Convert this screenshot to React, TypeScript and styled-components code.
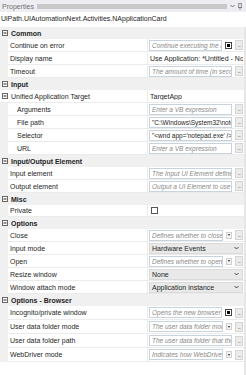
import React from 'react';
import styled, { createGlobalStyle } from 'styled-components';

const GlobalStyle = createGlobalStyle`
  html, body { margin: 0; padding: 0; background: #fff; }
  body { font-family: "Liberation Sans", Arial, sans-serif; }
  * { box-sizing: border-box; }
`;

const Panel = styled.div`
  width: 246px;
  height: 375px;
  overflow: hidden;
  background: #fff;
  display: flex;
  flex-direction: column;
`;

const TitleBar = styled.div`
  height: 12px;
  display: flex;
  align-items: center;
  gap: 3px;
  padding: 0 4px 0 2px;
  background: #eeeef2;
  font-size: 7px;
  color: #6e6e6e;
`;

const Grip = styled.div`
  flex: 1;
  height: 5px;
  background-image: radial-gradient(circle, #c6c6c6 0.7px, transparent 0.8px);
  background-size: 2px 2px;
`;

const TypeLine = styled.div`
  height: 12px;
  display: flex;
  align-items: center;
  padding-left: 1px;
  font-size: 7px;
  color: #1e1e1e;
  white-space: nowrap;
  margin-bottom: 3px;
`;

const Grid = styled.div`
  flex: 1;
  display: flex;
  flex-direction: column;
  border-right: 2px solid #e6e6e6;
`;

const CategoryRow = styled.div`
  height: 12px;
  display: flex;
  align-items: center;
  gap: 3px;
  padding-left: 2px;
  background: #f0f0f0;
  font-size: 7px;
  font-weight: bold;
  color: #1e1e1e;
`;

const PropRow = styled.div<{ $h?: number }>`
  height: ${p => p.$h ?? 13}px;
  display: grid;
  grid-template-columns: 8px 140px 1fr;
  background: #f0f0f0;
`;

const GroupRow = styled.div`
  height: 13px;
  display: grid;
  grid-template-columns: 148px 1fr;
  background: #fff;
`;

const Gutter = styled.div``;

const LabelCell = styled.div<{ $indent?: boolean }>`
  background: #fff;
  border-bottom: 1px solid #ebebeb;
  border-right: 1px solid #ebebeb;
  padding-left: ${p => (p.$indent ? 9 : 2)}px;
  display: flex;
  align-items: center;
  font-size: 7px;
  color: #262626;
  white-space: nowrap;
  overflow: hidden;
`;

const GroupLabel = styled(LabelCell)`
  padding-left: 2px;
  gap: 3px;
`;

const ValueCell = styled.div`
  background: #fff;
  border-bottom: 1px solid #ebebeb;
  display: flex;
  align-items: center;
  gap: 3px;
  padding: 0 1px;
  min-width: 0;
  overflow: hidden;
`;

const TextBox = styled.div<{ $filled?: boolean }>`
  flex: 1;
  min-width: 0;
  height: 11px;
  border: 1px solid #c9d3de;
  background: #fff;
  font-size: 6.5px;
  font-style: ${p => (p.$filled ? 'normal' : 'italic')};
  color: ${p => (p.$filled ? '#1e1e1e' : '#8a8a8a')};
  display: flex;
  align-items: center;
  padding: 0 2px;
  white-space: nowrap;
  overflow: hidden;
`;

const PlainValue = styled.div`
  font-size: 7px;
  color: #1e1e1e;
  padding-left: 1px;
  white-space: nowrap;
  overflow: hidden;
`;

const DotsButton = styled.div`
  flex: none;
  width: 8px;
  height: 10px;
  background: #ececec;
  border: 1px solid #d4d4d4;
  font-size: 5px;
  letter-spacing: -0.5px;
  line-height: 1;
  color: #333;
  display: flex;
  align-items: flex-end;
  justify-content: center;
  padding-bottom: 1px;
  overflow: hidden;
`;

const NullCheck = styled.div`
  flex: none;
  width: 7px;
  height: 7px;
  border: 1px solid #444;
  background: #fff;
  display: flex;
  align-items: center;
  justify-content: center;
  &::after {
    content: '';
    width: 3px;
    height: 3px;
    background: #000;
  }
`;

const EmptyCheck = styled.div`
  width: 7px;
  height: 7px;
  border: 1px solid #555;
  background: #fff;
  margin-left: 2px;
`;

const MiniDrop = styled.div`
  flex: none;
  width: 6px;
  height: 7px;
  border: 1px solid #d0d0d0;
  background: #f4f4f4;
  display: flex;
  align-items: center;
  justify-content: center;
  &::after {
    content: '';
    border-left: 1.5px solid transparent;
    border-right: 1.5px solid transparent;
    border-top: 2px solid #222;
  }
`;

const Select = styled.div`
  flex: 1;
  height: 11px;
  background: #e9e9e9;
  border: 1px solid #dadada;
  font-size: 7px;
  color: #1e1e1e;
  display: flex;
  align-items: center;
  justify-content: space-between;
  padding: 0 3px 0 2px;
  white-space: nowrap;
`;

const Expander = () => (
  <svg width="6" height="6" viewBox="0 0 6 6" style={{ flex: 'none' }}>
    <rect x="0.5" y="0.5" width="5" height="5" fill="#fff" stroke="#666" />
    <line x1="1.5" y1="3" x2="4.5" y2="3" stroke="#222" />
  </svg>
);

const Chevron = ({ color = '#444' }: { color?: string }) => (
  <svg width="5" height="4" viewBox="0 0 5 4" style={{ flex: 'none' }}>
    <polyline points="0.5,1 2.5,3 4.5,1" fill="none" stroke={color} strokeWidth="0.9" />
  </svg>
);

const Pin = () => (
  <svg width="4" height="7" viewBox="0 0 4 7" style={{ flex: 'none' }}>
    <rect x="0.7" y="0.5" width="2.6" height="4" fill="none" stroke="#777" strokeWidth="0.8" />
    <line x1="0" y1="4.5" x2="4" y2="4.5" stroke="#777" strokeWidth="0.8" />
    <line x1="2" y1="4.5" x2="2" y2="7" stroke="#777" strokeWidth="0.8" />
  </svg>
);

type Val =
  | { kind: 'text'; ph: string; filled?: boolean; check?: boolean; drop?: boolean }
  | { kind: 'plain'; v: string }
  | { kind: 'select'; v: string }
  | { kind: 'check' };

const Value = ({ val }: { val: Val }) => (
  <ValueCell>
    {val.kind === 'text' && (
      <>
        <TextBox $filled={val.filled}>{val.ph}</TextBox>
        {val.check && <NullCheck />}
        {val.drop && <MiniDrop />}
        <DotsButton>...</DotsButton>
      </>
    )}
    {val.kind === 'plain' && <PlainValue>{val.v}</PlainValue>}
    {val.kind === 'select' && (
      <Select>
        {val.v}
        <Chevron color="#333" />
      </Select>
    )}
    {val.kind === 'check' && <EmptyCheck />}
  </ValueCell>
);

const Row = ({ label, val, h, indent }: { label: string; val: Val; h?: number; indent?: boolean }) => (
  <PropRow $h={h}>
    <Gutter />
    <LabelCell $indent={indent}>{label}</LabelCell>
    <Value val={val} />
  </PropRow>
);

const Category = ({ title }: { title: string }) => (
  <CategoryRow>
    <Expander />
    {title}
  </CategoryRow>
);

export default function App() {
  return (
    <>
      <GlobalStyle />
      <Panel>
        <TitleBar>
          Properties
          <Grip />
          <Chevron color="#666" />
          <Pin />
        </TitleBar>
        <TypeLine>UiPath.UIAutomationNext.Activities.NApplicationCard</TypeLine>
        <Grid>
          <Category title="Common" />
          <Row label="Continue on error" val={{ kind: 'text', ph: 'Continue executing the activity', check: true }} />
          <Row label="Display name" val={{ kind: 'plain', v: 'Use Application: *Untitled - Notepad' }} />
          <Row label="Timeout" val={{ kind: 'text', ph: 'The amount of time (in seconds)' }} />
          <Category title="Input" />
          <GroupRow>
            <GroupLabel>
              <Expander />
              Unified Application Target
            </GroupLabel>
            <Value val={{ kind: 'plain', v: 'TargetApp' }} />
          </GroupRow>
          <Row indent label="Arguments" val={{ kind: 'text', ph: 'Enter a VB expression' }} />
          <Row indent label="File path" val={{ kind: 'text', ph: '"C:\\Windows\\System32\\notepad.exe"', filled: true }} />
          <Row indent label="Selector" val={{ kind: 'text', ph: "\"<wnd app='notepad.exe' />\"", filled: true }} />
          <Row indent label="URL" val={{ kind: 'text', ph: 'Enter a VB expression' }} />
          <Category title="Input/Output Element" />
          <Row label="Input element" val={{ kind: 'text', ph: 'The Input UI Element defines' }} />
          <Row label="Output element" val={{ kind: 'text', ph: 'Output a UI Element to use' }} />
          <Category title="Misc" />
          <Row label="Private" h={12} val={{ kind: 'check' }} />
          <Category title="Options" />
          <Row label="Close" val={{ kind: 'text', ph: 'Defines whether to close', drop: true }} />
          <Row label="Input mode" val={{ kind: 'select', v: 'Hardware Events' }} />
          <Row label="Open" val={{ kind: 'text', ph: 'Defines whether to open', drop: true }} />
          <Row label="Resize window" val={{ kind: 'select', v: 'None' }} />
          <Row label="Window attach mode" val={{ kind: 'select', v: 'Application instance' }} />
          <Category title="Options - Browser" />
          <Row label="Incognito/private window" h={14} val={{ kind: 'text', ph: 'Opens the new browser', check: true }} />
          <Row label="User data folder mode" h={14} val={{ kind: 'text', ph: 'The user data folder mode', drop: true }} />
          <Row label="User data folder path" h={14} val={{ kind: 'text', ph: 'The user data folder that the' }} />
          <Row label="WebDriver mode" h={14} val={{ kind: 'text', ph: 'Indicates how WebDriver', drop: true }} />
        </Grid>
      </Panel>
    </>
  );
}
